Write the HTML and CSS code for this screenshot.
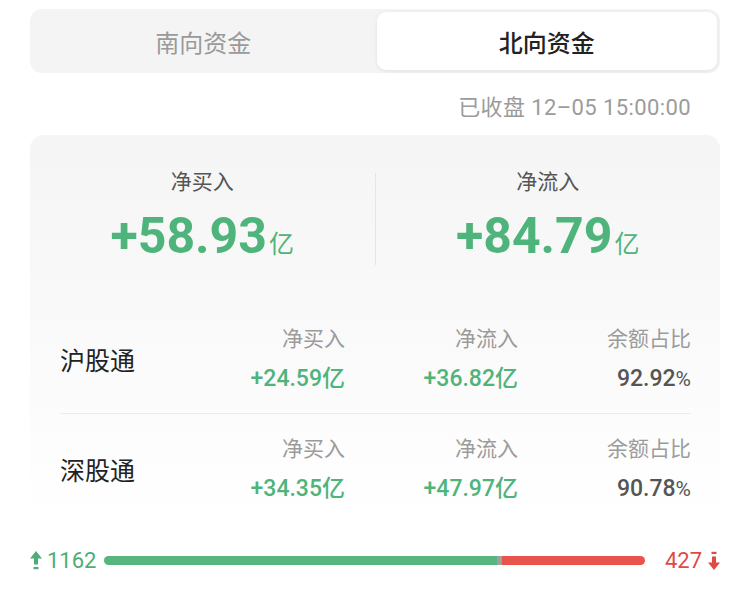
FILE: index.html
```html
<!DOCTYPE html>
<html lang="zh-CN">
<head>
<meta charset="utf-8">
<title>北向资金</title>
<link rel="stylesheet" href="styles.css">
</head>
<body>
<div class="page">
  <div class="tabs">
    <div class="tab">南向资金</div>
    <div class="tab active">北向资金</div>
  </div>
  <div class="timestamp">已收盘 12–05 15:00:00</div>
  <div class="card">
    <div class="summary">
      <div class="sum-col">
        <div class="sum-label">净买入</div>
        <div class="sum-value">+58.93<span class="unit">亿</span></div>
      </div>
      <div class="sum-col">
        <div class="sum-label">净流入</div>
        <div class="sum-value">+84.79<span class="unit">亿</span></div>
      </div>
    </div>
    <div class="row">
      <div class="name">沪股通</div>
      <div class="cell"><div class="head">净买入</div><div class="val green">+24.59亿</div></div>
      <div class="cell"><div class="head">净流入</div><div class="val green">+36.82亿</div></div>
      <div class="cell"><div class="head">余额占比</div><div class="val dark">92.92<span class="pct">%</span></div></div>
    </div>
    <div class="row last">
      <div class="name">深股通</div>
      <div class="cell"><div class="head">净买入</div><div class="val green">+34.35亿</div></div>
      <div class="cell"><div class="head">净流入</div><div class="val green">+47.97亿</div></div>
      <div class="cell"><div class="head">余额占比</div><div class="val dark">90.78<span class="pct">%</span></div></div>
    </div>
  </div>
  <div class="ratio">
    <svg class="arrow" width="12" height="19" viewBox="0 0 12 19"><path d="M6 0 L12 7.5 L8 7.5 L8 13.5 L4 13.5 L4 7.5 L0 7.5 Z" fill="#4cae76"/><rect x="3.5" y="16" width="5" height="2.2" fill="#4cae76"/></svg>
    <span class="up-num">1162</span>
    <div class="bar">
      <div class="bar-up" style="width:72.6%"></div>
      <div class="bar-flat"></div>
      <div class="bar-down"></div>
    </div>
    <span class="down-num">427</span>
    <svg class="arrow" width="12" height="19" viewBox="0 0 12 19"><rect x="3.5" y="0.8" width="5" height="2.2" fill="#e04a44"/><path d="M6 19 L12 11.5 L8 11.5 L8 5.5 L4 5.5 L4 11.5 L0 11.5 Z" fill="#e04a44"/></svg>
  </div>
</div>
</body>
</html>
```
FILE: styles.css
```css
* { box-sizing: border-box; }
html, body { margin: 0; padding: 0; background: #fff; }
body {
  font-family: Roboto, "Noto Sans CJK SC", "Noto Sans", sans-serif;
  color: #222;
}
.page {
  width: 750px;
  padding: 9px 30px 0 30px;
}
.tabs {
  display: flex;
  height: 64px;
  padding: 3px;
  background: #f4f4f4;
  border-radius: 12px;
}
.tab {
  flex: 1;
  display: flex;
  align-items: center;
  justify-content: center;
  font-size: 24px;
  color: #9a9a9a;
  border-radius: 9px;
}
.tab.active {
  margin-left: 3px;
  background: #fff;
  color: #222;
  font-weight: 500;
  box-shadow: 0 1px 4px rgba(0,0,0,0.08);
}
.timestamp {
  margin-top: 20px;
  text-align: right;
  padding-right: 29px;
  font-size: 22px;
  letter-spacing: 0.4px;
  line-height: 30px;
  color: #9b9b9b;
}
.card {
  margin-top: 12px;
  border-radius: 14px;
  background: linear-gradient(to bottom, #f5f5f5 0%, #f9f9f9 45%, #fdfdfd 80%, #ffffff 100%);
}
.summary {
  display: flex;
  padding-top: 32px;
  height: 170px;
}
.sum-col {
  flex: 1;
  display: flex;
  flex-direction: column;
  align-items: center;
}
.sum-col:first-child {
  border-right: 1px solid #e6e6e6;
  height: 92px;
  margin-top: 6px;
}
.sum-col:first-child .sum-label { margin-top: -6px; }
.sum-label {
  font-size: 21px;
  line-height: 30px;
  color: #555;
}
.sum-value {
  margin-top: 9px;
  font-size: 50px;
  line-height: 60px;
  font-weight: 700;
  color: #4fb47b;
}
.unit {
  font-size: 25px;
  font-weight: 400;
  margin-left: 2px;
}
.row {
  display: grid;
  grid-template-columns: 1fr 173px 173px 173px;
  align-items: center;
  margin: 0 29px 0 30px;
  height: 109px;
  border-bottom: 1px solid #ececec;
}
.row.last { border-bottom: none; }
.name {
  font-size: 25px;
  color: #222;
}
.cell { text-align: right; }
.head {
  font-size: 21px;
  line-height: 30px;
  color: #9b9b9b;
}
.val {
  margin-top: 10px;
  font-size: 23px;
  line-height: 30px;
  font-weight: 500;
}
.green { color: #4fb47b; }
.dark { color: #555; }
.pct { font-weight: 400; font-size: 21px; }
.ratio {
  display: flex;
  align-items: center;
  height: 30px;
  margin-top: 22px;
}
.arrow { flex: none; }
.up-num {
  margin-left: 5px;
  font-size: 22px;
  color: #4cae76;
  width: 57px;
}
.down-num {
  margin-left: 20px;
  margin-right: 6px;
  font-size: 22px;
  color: #e04a44;
}
.bar {
  flex: 1;
  display: flex;
  height: 9px;
  border-radius: 5px;
  overflow: hidden;
}
.bar-up { background: #58b57f; }
.bar-flat { width: 5px; background: #9aa39c; }
.bar-down { flex: 1; background: #e8534b; }
```
